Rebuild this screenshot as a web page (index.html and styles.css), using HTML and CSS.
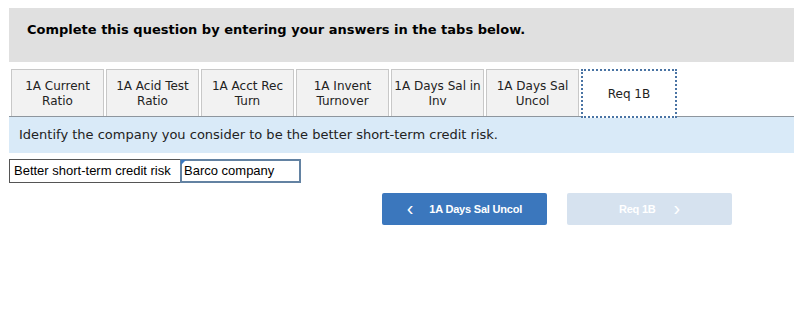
FILE: index.html
```html
<!DOCTYPE html>
<html lang="en">
<head>
    <meta charset="UTF-8">
    <meta name="viewport" content="width=device-width, initial-scale=1.0">
    <title>Req 1B</title>
    <link rel="stylesheet" href="styles.css">
</head>
<body>
    <div class="page">
        <div class="instructions">
            Complete this question by entering your answers in the tabs below.
        </div>

        <div class="tabs">
            <div class="tab">1A Current<br>Ratio</div>
            <div class="tab">1A Acid Test<br>Ratio</div>
            <div class="tab">1A Acct Rec<br>Turn</div>
            <div class="tab">1A Invent<br>Turnover</div>
            <div class="tab">1A Days Sal in<br>Inv</div>
            <div class="tab">1A Days Sal<br>Uncol</div>
            <div class="tab active">Req 1B</div>
        </div>

        <div class="prompt">
            Identify the company you consider to be the better short-term credit risk.
        </div>

        <div class="answer-row">
            <div class="answer-label">Better short-term credit risk</div>
            <div class="answer-input">Barco company</div>
        </div>

        <div class="nav">
            <button class="nav-btn prev"><span class="chev">&lsaquo;</span>1A Days Sal Uncol</button>
            <button class="nav-btn next">Req 1B<span class="chev">&rsaquo;</span></button>
        </div>
    </div>
</body>
</html>
```

FILE: styles.css
```css
body {
    margin: 0;
    font-family: Verdana, "DejaVu Sans", sans-serif;
    background: #fff;
    color: #000;
}
.page {
    padding: 8px 0 0 9px;
}
.instructions {
    background: #e0e0e0;
    height: 54px;
    box-sizing: border-box;
    padding: 14px 0 0 18px;
    font-size: 13px;
    font-weight: bold;
    line-height: 16px;
}
.tabs {
    display: flex;
    gap: 2px;
    margin: 7px 0 0 2px;
    height: 47px;
}
.tab {
    width: 93px;
    box-sizing: border-box;
    border: 1px solid #c8c8c8;
    border-bottom: none;
    background: #f2f2f2;
    font-size: 12px;
    line-height: 15px;
    text-align: center;
    padding-top: 9px;
    color: #222;
}
.tab.active {
    width: 96px;
    background: #fff;
    border: 2px dotted #4a74a4;
    height: 49px;
    padding-top: 16px;
    position: relative;
    z-index: 1;
}
.prompt {
    background: #d9eaf8;
    border-top: 1px solid #8e969e;
    height: 37px;
    box-sizing: border-box;
    padding: 10px 0 0 10px;
    font-size: 13px;
    line-height: 16px;
    color: #222;
}
.answer-row {
    display: flex;
    margin-top: 6px;
    height: 24px;
    font-family: "Liberation Sans", Arial, sans-serif;
    font-size: 13px;
}
.answer-label {
    width: 171px;
    box-sizing: border-box;
    border: 1px solid #555;
    border-right: none;
    padding: 3px 0 0 4px;
}
.answer-input {
    position: relative;
    width: 121px;
    box-sizing: border-box;
    border: 2px solid #6382a2;
    padding: 2px 0 0 2px;
}
.answer-input::before {
    content: "";
    position: absolute;
    left: -1px;
    top: -1px;
    border-top: 5px solid #3a78c0;
    border-right: 5px solid transparent;
}
.nav {
    display: flex;
    gap: 20px;
    margin: 10px 0 0 373px;
}
.nav-btn {
    width: 165px;
    height: 32px;
    border: none;
    border-radius: 2px;
    color: #fff;
    font-family: "Liberation Sans", Arial, sans-serif;
    font-size: 11px;
    font-weight: bold;
    letter-spacing: -0.2px;
    display: flex;
    align-items: center;
    justify-content: center;
    gap: 16px;
}
.nav-btn.prev {
    background: #3b77bd;
}
.nav-btn.next {
    background: #d6e2ef;
    gap: 18px;
}
.chev {
    font-size: 20px;
    font-weight: normal;
    line-height: 1;
    position: relative;
    top: -1px;
}
```
